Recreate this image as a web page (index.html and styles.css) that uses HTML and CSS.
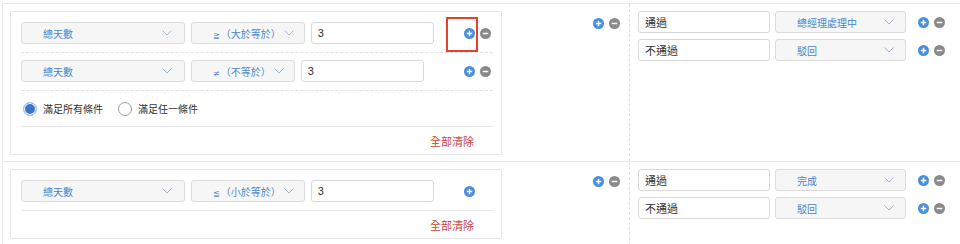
FILE: index.html
```html
<!DOCTYPE html>
<html>
<head>
	<meta charset="utf-8">
	<title>簽核條件設定</title>
	<link rel="stylesheet" href="styles.css">
</head>
<body>
<div class="rule-table">

	<!-- rule 1 -->
	<div class="rule-row">
		<div class="cond-cell">
			<div class="cond-box">
				<div class="cond-line">
					<div class="pick pick-field"><span>總天數</span><svg class="chev" viewBox="0 0 10 6"><path d="M0.5 0.5L5 5L9.5 0.5"/></svg></div>
					<div class="pick"><span><b class="sym">≧</b>（大於等於）</span><svg class="chev" viewBox="0 0 10 6"><path d="M0.5 0.5L5 5L9.5 0.5"/></svg></div>
					<input class="num" type="text" value="3">
					<div class="ops">
						<svg class="ico" viewBox="0 0 12 12"><circle class="ico-add" cx="6" cy="6" r="6"/><path d="M6 3v6M3 6h6"/></svg>
						<svg class="ico" viewBox="0 0 12 12"><circle class="ico-del" cx="6" cy="6" r="6"/><path d="M3 6h6"/></svg>
					</div>
				</div>
				<div class="cond-line">
					<div class="pick pick-field"><span>總天數</span><svg class="chev" viewBox="0 0 10 6"><path d="M0.5 0.5L5 5L9.5 0.5"/></svg></div>
					<div class="pick"><span><b class="sym">≠</b>（不等於）</span><svg class="chev" viewBox="0 0 10 6"><path d="M0.5 0.5L5 5L9.5 0.5"/></svg></div>
					<input class="num" type="text" value="3">
					<div class="ops">
						<svg class="ico" viewBox="0 0 12 12"><circle class="ico-add" cx="6" cy="6" r="6"/><path d="M6 3v6M3 6h6"/></svg>
						<svg class="ico" viewBox="0 0 12 12"><circle class="ico-del" cx="6" cy="6" r="6"/><path d="M3 6h6"/></svg>
					</div>
				</div>
				<div class="match-line">
					<label class="match"><span class="radio on"></span>滿足所有條件</label>
					<label class="match"><span class="radio"></span>滿足任一條件</label>
				</div>
				<div class="clear-line"><a class="clear">全部清除</a></div>
				<div class="mark"></div>
			</div>
			<div class="ops ops-rule">
				<svg class="ico" viewBox="0 0 12 12"><circle class="ico-add" cx="6" cy="6" r="6"/><path d="M6 3v6M3 6h6"/></svg>
				<svg class="ico" viewBox="0 0 12 12"><circle class="ico-del" cx="6" cy="6" r="6"/><path d="M3 6h6"/></svg>
			</div>
		</div>
		<div class="result-cell">
			<div class="result-line">
				<input class="result-name" type="text" value="通過">
				<div class="pick pick-state"><span>總經理處理中</span><svg class="chev" viewBox="0 0 10 6"><path d="M0.5 0.5L5 5L9.5 0.5"/></svg></div>
				<div class="ops">
					<svg class="ico" viewBox="0 0 12 12"><circle class="ico-add" cx="6" cy="6" r="6"/><path d="M6 3v6M3 6h6"/></svg>
					<svg class="ico" viewBox="0 0 12 12"><circle class="ico-del" cx="6" cy="6" r="6"/><path d="M3 6h6"/></svg>
				</div>
			</div>
			<div class="result-line">
				<input class="result-name" type="text" value="不通過">
				<div class="pick pick-state"><span>駁回</span><svg class="chev" viewBox="0 0 10 6"><path d="M0.5 0.5L5 5L9.5 0.5"/></svg></div>
				<div class="ops">
					<svg class="ico" viewBox="0 0 12 12"><circle class="ico-add" cx="6" cy="6" r="6"/><path d="M6 3v6M3 6h6"/></svg>
					<svg class="ico" viewBox="0 0 12 12"><circle class="ico-del" cx="6" cy="6" r="6"/><path d="M3 6h6"/></svg>
				</div>
			</div>
		</div>
	</div>

	<!-- rule 2 -->
	<div class="rule-row">
		<div class="cond-cell">
			<div class="cond-box">
				<div class="cond-line last">
					<div class="pick pick-field"><span>總天數</span><svg class="chev" viewBox="0 0 10 6"><path d="M0.5 0.5L5 5L9.5 0.5"/></svg></div>
					<div class="pick"><span><b class="sym">≦</b>（小於等於）</span><svg class="chev" viewBox="0 0 10 6"><path d="M0.5 0.5L5 5L9.5 0.5"/></svg></div>
					<input class="num" type="text" value="3">
					<div class="ops">
						<svg class="ico" viewBox="0 0 12 12"><circle class="ico-add" cx="6" cy="6" r="6"/><path d="M6 3v6M3 6h6"/></svg>
						<svg class="ico hidden" viewBox="0 0 12 12"><circle class="ico-del" cx="6" cy="6" r="6"/><path d="M3 6h6"/></svg>
					</div>
				</div>
				<div class="clear-line"><a class="clear">全部清除</a></div>
			</div>
			<div class="ops ops-rule">
				<svg class="ico" viewBox="0 0 12 12"><circle class="ico-add" cx="6" cy="6" r="6"/><path d="M6 3v6M3 6h6"/></svg>
				<svg class="ico" viewBox="0 0 12 12"><circle class="ico-del" cx="6" cy="6" r="6"/><path d="M3 6h6"/></svg>
			</div>
		</div>
		<div class="result-cell">
			<div class="result-line">
				<input class="result-name" type="text" value="通過">
				<div class="pick pick-state"><span>完成</span><svg class="chev" viewBox="0 0 10 6"><path d="M0.5 0.5L5 5L9.5 0.5"/></svg></div>
				<div class="ops">
					<svg class="ico" viewBox="0 0 12 12"><circle class="ico-add" cx="6" cy="6" r="6"/><path d="M6 3v6M3 6h6"/></svg>
					<svg class="ico" viewBox="0 0 12 12"><circle class="ico-del" cx="6" cy="6" r="6"/><path d="M3 6h6"/></svg>
				</div>
			</div>
			<div class="result-line">
				<input class="result-name" type="text" value="不通過">
				<div class="pick pick-state"><span>駁回</span><svg class="chev" viewBox="0 0 10 6"><path d="M0.5 0.5L5 5L9.5 0.5"/></svg></div>
				<div class="ops">
					<svg class="ico" viewBox="0 0 12 12"><circle class="ico-add" cx="6" cy="6" r="6"/><path d="M6 3v6M3 6h6"/></svg>
					<svg class="ico" viewBox="0 0 12 12"><circle class="ico-del" cx="6" cy="6" r="6"/><path d="M3 6h6"/></svg>
				</div>
			</div>
		</div>
	</div>

</div>
</body>
</html>
```

FILE: styles.css
```css
body {
	margin: 0;
	background-color: #ffffff;
	color: #333333;
	font-family: "Noto Sans CJK TC", "Liberation Sans", sans-serif;
	font-size: 10px;
}
.rule-table {
	margin: 3px 0 0 2px;
	border-top: 1px solid #e8e8e8;
	border-left: 1px solid #e8e8e8;
}
.rule-row {
	display: flex;
	border-bottom: 1px solid #e8e8e8;
}
.cond-cell {
	width: 627px;
	box-sizing: border-box;
	display: flex;
	align-items: flex-start;
	padding: 7px 9px 6px 7px;
	border-right: 1px dashed #dedede;
}
.cond-box {
	position: relative;
	width: 492px;
	box-sizing: border-box;
	padding: 3px 8px 0 10px;
	border: 1px solid #e6e6e6;
}
.cond-line {
	display: flex;
	align-items: center;
	padding: 7px 0 8px 0;
	border-bottom: 1px dashed #e2e2e2;
}
.cond-line.last { border-bottom: none; }

/* select look-alike */
.pick {
	height: 22px;
	box-sizing: border-box;
	display: flex;
	align-items: center;
	justify-content: space-between;
	padding: 0 10px 0 21px;
	margin-right: 6px;
	background-color: #f6f6f6;
	border: 1px solid #dcdcdc;
	border-radius: 3px;
	color: #4a86cb;
	white-space: nowrap;
}
.pick span { margin-right: 3px; }
.pick .sym {
	font-family: "DejaVu Sans", sans-serif;
	font-size: 8px;
	font-weight: normal;
	margin-right: 1px;
}
.pick-field { width: 164px; padding-right: 12px; }
.pick-state { width: 131px; margin-right: 0; padding-right: 11px; }
.chev {
	width: 10px;
	height: 6px;
	flex: none;
}
.chev path {
	fill: none;
	stroke: #9fb8d8;
	stroke-width: 1;
}

.num, .result-name {
	height: 22px;
	box-sizing: border-box;
	padding: 0 6px;
	margin: 0;
	background-color: #ffffff;
	border: 1px solid #d9d9d9;
	border-radius: 3px;
	color: #333333;
	font-family: "Liberation Sans", "Noto Sans CJK TC", sans-serif;
	font-size: 11px;
	outline: none;
}
.num { width: 123px; }
.result-name { width: 132px; margin-right: 5px; }

/* plus / minus buttons */
.ops {
	display: flex;
	gap: 5px;
	margin-left: auto;
	margin-right: 2px;
}
.ico {
	width: 11px;
	height: 11px;
	display: block;
}
.ico path {
	stroke: #ffffff;
	stroke-width: 1.6;
}
.ico-add { fill: #4a8fd9; }
.ico-del { fill: #8a8a8a; }
.ico.hidden { visibility: hidden; }
.ops-rule { margin-top: 7px; margin-right: 0; }

.match-line {
	height: 35px;
	display: flex;
	align-items: center;
	padding-left: 2px;
}
.match {
	display: flex;
	align-items: center;
	margin-right: 15px;
	color: #333333;
}
.radio {
	width: 14px;
	height: 14px;
	box-sizing: border-box;
	margin-right: 6px;
	border: 1px solid #9a9a9a;
	border-radius: 50%;
	background-color: #ffffff;
}
.radio.on {
	border-color: #a6c4ea;
	background-color: #3a76c4;
	box-shadow: inset 0 0 0 1px #ffffff;
}

.clear-line {
	height: 27px;
	display: flex;
	align-items: center;
	justify-content: flex-end;
	padding-right: 19px;
	border-top: 1px solid #e8e8e8;
}
.clear {
	color: #c8443a;
	font-size: 11px;
	cursor: pointer;
}

/* highlight frame drawn over the first add button */
.mark {
	position: absolute;
	left: 435px;
	top: 5px;
	width: 32px;
	height: 35px;
	box-sizing: border-box;
	border: 2px solid #e4412d;
}

.result-cell {
	flex: 1;
	display: flex;
	flex-direction: column;
	gap: 6px;
	padding: 7px 0 0 8px;
}
.result-line {
	display: flex;
	align-items: center;
}
.result-line .ops {
	margin-left: 12px;
	margin-right: 0;
}
```
